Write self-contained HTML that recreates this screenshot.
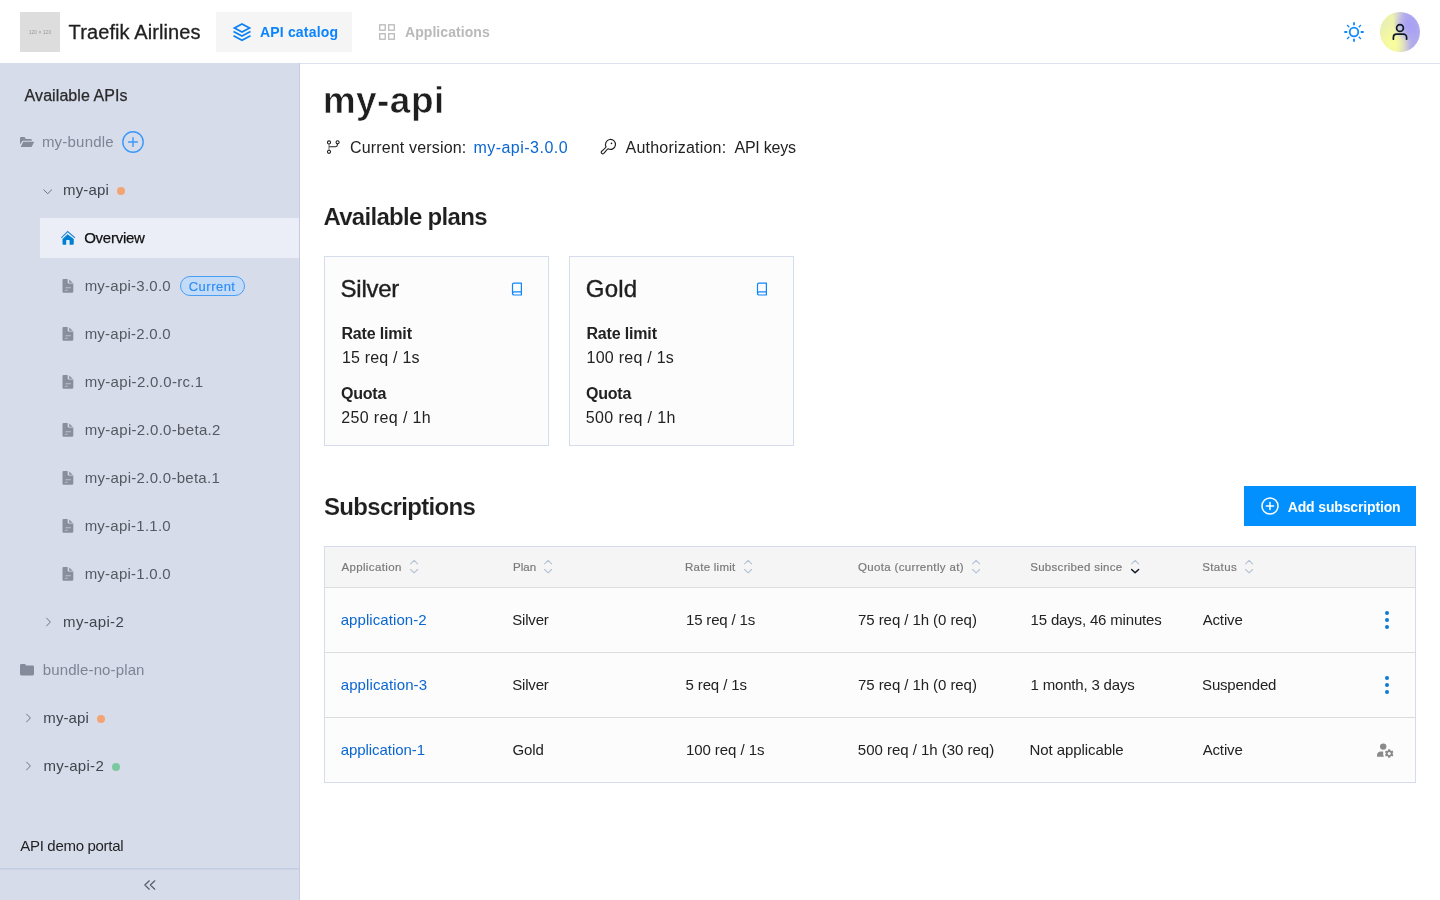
<!DOCTYPE html>
<html lang="en">
<head>
<meta charset="utf-8">
<title>Traefik Airlines - API catalog</title>
<style>
*{box-sizing:border-box;margin:0;padding:0}
html,body{width:1440px;height:900px;overflow:hidden;background:#fff}
body{font-family:"Liberation Sans",sans-serif;color:#222;position:relative;font-size:15px}
.abs,.t{position:absolute;white-space:nowrap}
.t{line-height:20px;height:20px;will-change:transform}
svg{position:absolute;overflow:visible}
a{text-decoration:none;color:inherit}

/* header */
#hdr{position:absolute;left:0;top:0;width:1440px;height:64px;background:#fff;border-bottom:1px solid #dde2ee}
#logo{position:absolute;left:20px;top:12px;width:40px;height:40px;background:#dddddd}
#logo span{position:absolute;left:0;top:17px;width:40px;text-align:center;font-size:5px;line-height:6px;color:#9a9a9a;will-change:transform}
#tab1{position:absolute;left:216px;top:12px;width:136px;height:40px;background:#f5f5f5}

/* sidebar */
#side{position:absolute;left:0;top:63px;width:300px;height:837px;background:#d6dcea;border-right:1px solid #c3cde2}
#sel{position:absolute;left:40px;top:155px;width:259px;height:40px;background:#ebeef6}
#sfoot{position:absolute;left:0;top:805px;width:299px;height:32px;border-top:1px solid #c3cde2;box-shadow:inset 0 1px 0 rgba(195,205,226,.55)}
.dot{position:absolute;width:8px;height:8px;border-radius:50%}
.badge{position:absolute;left:180px;top:212px;width:65px;height:20px;border:1px solid #4a9ff5;border-radius:10px;background:#c3dbf6}

/* main */
.card{position:absolute;top:256px;width:225px;height:190px;border:1px solid #d5dcec;background:#fcfcfc}
#btn{position:absolute;left:1244px;top:486px;width:172px;height:40px;background:#0290ff}
#tbl{position:absolute;left:324px;top:546px;width:1092px;height:237px;border:1px solid #d5dcec;background:#fcfcfc}
#th{position:absolute;left:0;top:0;width:1090px;height:41px;background:#f5f5f5;border-bottom:1px solid #dcdcdc}
.rb{position:absolute;left:0;width:1090px;height:1px;background:#dcdcdc}
.h{font-size:11.5px;color:#7a7a7a;font-weight:400;-webkit-text-stroke:0.2px #7a7a7a}
.lnk{color:#0b66d0}
.b{font-weight:700}
.sv{color:#565961}
#h1{-webkit-text-stroke:0.6px #fff}
#h2a,#h2b{-webkit-text-stroke:0.1px #fff}
#c1t,#c2t{-webkit-text-stroke:0.4px #1f1f1f}
#s-ov{-webkit-text-stroke:0.25px #111}
#s-title{-webkit-text-stroke:0.25px #2a2a2a}
#s-cur{-webkit-text-stroke:0.2px #2f8ef5}
#brand{-webkit-text-stroke:0.3px #1f1f1f}
</style>
<style id="fit">
#brand{letter-spacing:0.101px;text-indent:0.62px}
#tabt1{letter-spacing:0.175px;text-indent:-0.03px}
#tabt2{letter-spacing:0.06px;text-indent:0.04px}
#s-title{letter-spacing:0.078px;text-indent:0.61px}
#s-b1{letter-spacing:0.224px;text-indent:-0.11px}
#s-a1{letter-spacing:0.144px;text-indent:-0.01px}
#s-ov{letter-spacing:-0.24px;text-indent:0.13px}
#sv0{letter-spacing:0.243px;text-indent:0.64px}
#s-cur{letter-spacing:0.481px;text-indent:-0.25px}
#sv1{letter-spacing:0.243px;text-indent:0.64px}
#sv2{letter-spacing:0.324px;text-indent:0.64px}
#sv3{letter-spacing:0.316px;text-indent:0.64px}
#sv4{letter-spacing:0.283px;text-indent:0.64px}
#sv5{letter-spacing:0.243px;text-indent:0.64px}
#sv6{letter-spacing:0.243px;text-indent:0.64px}
#s-a2{letter-spacing:0.332px;text-indent:0.1px}
#s-b2{letter-spacing:0.124px;text-indent:0.75px}
#s-a3{letter-spacing:0.084px;text-indent:0.33px}
#s-a4{letter-spacing:0.287px;text-indent:0.38px}
#s-portal{letter-spacing:-0.307px;text-indent:0.25px}
#h1{letter-spacing:0.475px;text-indent:-1.38px}
#m1{letter-spacing:0.17px;text-indent:-0.1px}
#m2{letter-spacing:0.48px;text-indent:-0.61px}
#m3{letter-spacing:0.213px;text-indent:-0.51px}
#m4{letter-spacing:-0.235px;text-indent:0.47px}
#h2a{letter-spacing:-0.696px;text-indent:-0.61px}
#c1t{letter-spacing:-0.273px;text-indent:-0.42px}
#c1a{letter-spacing:-0.166px;text-indent:0.46px}
#c1b{letter-spacing:0.193px;text-indent:0.95px}
#c1c{letter-spacing:-0.208px;text-indent:-0.04px}
#c1d{letter-spacing:0.359px;text-indent:0.3px}
#c2t{letter-spacing:0.158px;text-indent:-0.18px}
#c2a{letter-spacing:-0.166px;text-indent:0.46px}
#c2b{letter-spacing:0.253px;text-indent:0.55px}
#c2c{letter-spacing:-0.208px;text-indent:-0.04px}
#c2d{letter-spacing:0.383px;text-indent:-0.24px}
#h2b{letter-spacing:-0.681px;text-indent:-0.02px}
#btnt{letter-spacing:-0.151px;text-indent:-0.26px}
#th0{letter-spacing:0.362px;text-indent:0.42px}
#th1{letter-spacing:0.042px;text-indent:-0.01px}
#th2{letter-spacing:0.266px;text-indent:-1.04px}
#th3{letter-spacing:0.349px;text-indent:-0.14px}
#th4{letter-spacing:0.3px;text-indent:0.18px}
#th5{letter-spacing:0.359px;text-indent:-0.72px}
#r0c0{letter-spacing:0.078px;text-indent:-0.32px}
#r1c0{letter-spacing:0.108px;text-indent:-0.32px}
#r2c0{letter-spacing:-0.052px;text-indent:-0.32px}
#r0c1{letter-spacing:-0.181px;text-indent:-0.79px}
#r1c1{letter-spacing:-0.181px;text-indent:-0.79px}
#r2c1{letter-spacing:-0.119px;text-indent:-0.53px}
#r0c2{letter-spacing:-0.156px;text-indent:-0.06px}
#r1c2{letter-spacing:-0.116px;text-indent:-0.54px}
#r2c2{letter-spacing:-0.07px;text-indent:-0.06px}
#r0c3{letter-spacing:-0.066px;text-indent:0.02px}
#r1c3{letter-spacing:-0.066px;text-indent:0.02px}
#r2c3{letter-spacing:-0.019px;text-indent:-0.2px}
#r0c4{letter-spacing:-0.172px;text-indent:0.61px}
#r1c4{letter-spacing:-0.188px;text-indent:0.61px}
#r2c4{letter-spacing:-0.074px;text-indent:-0.43px}
#r0c5{letter-spacing:-0.133px;text-indent:-0.38px}
#r1c5{letter-spacing:-0.204px;text-indent:-0.9px}
#r2c5{letter-spacing:-0.133px;text-indent:-0.38px}
</style>
</head>
<body>

<!-- ================= HEADER ================= -->
<div id="hdr">
  <div id="logo"><span>120 × 120</span></div>
  <div class="t" id="brand" style="left:68px;top:20px;font-size:20px;line-height:24px;height:24px;color:#1f1f1f">Traefik Airlines</div>
  <div id="tab1"></div>
  <div class="t b" id="tabt1" style="left:260px;top:22px;color:#0a84ff;font-size:14px">API catalog</div>

  <!-- layers icon -->
  <svg id="ic-layers" style="left:233px;top:22px" width="18" height="20" viewBox="0 0 18 20" fill="none" stroke="#0a80f2" stroke-width="1.7" stroke-linejoin="miter" stroke-linecap="butt">
    <path d="M9 1.9 L16.6 6 L9 10.1 L1.4 6 Z"/>
    <path d="M0.5 9.6 L9 14 L17.5 9.6"/>
    <path d="M0.5 13.8 L9 18.2 L17.5 13.8"/>
  </svg>
  <!-- grid icon -->
  <svg id="ic-grid" style="left:378px;top:24px" width="18" height="16" viewBox="0 0 18 16" fill="none" stroke="#b7b7b7" stroke-width="1.25">
    <rect x="1.7" y="0.8" width="5.5" height="5.4"/>
    <rect x="10.7" y="0.8" width="5.6" height="5.4"/>
    <rect x="1.7" y="9.7" width="5.5" height="5.5"/>
    <rect x="10.7" y="9.7" width="5.6" height="5.5"/>
  </svg>
  <!-- sun icon -->
  <svg id="ic-sun" style="left:1344px;top:22px" width="20" height="20" viewBox="0 0 20 20" fill="none" stroke="#1188ff" stroke-width="1.8" stroke-linecap="butt">
    <circle cx="10" cy="10" r="4.3"/>
    <path d="M10 0.3v3M10 16.7v3M0.3 10h3M16.7 10h3"/>
    <path d="M3.1 3.1l2.1 2.1M14.8 14.8l2.1 2.1M3.1 16.9l2.1-2.1M14.8 5.2l2.1-2.1" stroke-width="1.35"/>
  </svg>
  <!-- avatar -->
  <div id="avatar" style="position:absolute;left:1380px;top:12px;width:40px;height:40px;border-radius:50%;background:radial-gradient(circle at 72% 35%,rgba(166,156,247,.85) 0%,rgba(166,156,247,0) 40%),radial-gradient(circle at 30% 78%,rgba(251,254,154,.95) 0%,rgba(251,254,154,0) 48%),linear-gradient(83deg,#e6edb4 0%,#eef3ac 37%,#d2cfd6 52%,#b3adec 67%,#aea9ee 85%,#b9b5e6 100%)"></div>
  <svg id="ic-user" style="left:1391px;top:23px" width="18" height="18" viewBox="0 0 18 18" fill="none" stroke="#0e1a2b" stroke-width="1.7" stroke-linecap="round">
    <circle cx="9" cy="5" r="3.4"/>
    <path d="M2.4 16.2v-2a3.1 3.1 0 0 1 3.1-3.1h7a3.1 3.1 0 0 1 3.1 3.1v2"/>
  </svg>
  <div class="t b" id="tabt2" style="left:405px;top:22px;color:#b9b9b9;font-size:14px">Applications</div>
</div>

<!-- ================= SIDEBAR ================= -->
<div id="side">
  <div id="sel"></div>
  <div id="sfoot"></div>
</div>


<!-- sidebar content (absolute to body) -->
<div class="t" id="s-title" style="left:24px;top:86px;font-size:16px;color:#2a2a2a">Available APIs</div>

<!-- my-bundle -->
<svg id="ic-fopen" style="left:20px;top:137px" width="14" height="10" viewBox="0 0 14 10"><path d="M0 1a1 1 0 0 1 1-1h3.5l1.3 1.9h5a1 1 0 0 1 1 1v.95H3.3a1.6 1.6 0 0 0-1.45.9L0 7.6z" fill="#868b9b"/><path d="M3.2 4.8h10.3a.45.45 0 0 1 .4.65l-2.1 4a1 1 0 0 1-.9.55H.75z" fill="#868b9b"/></svg>
<div class="t" id="s-b1" style="left:42px;top:132px;color:#7e8495">my-bundle</div>
<svg id="ic-plusc" style="left:122px;top:131px" width="22" height="22" viewBox="0 0 22 22" fill="none" stroke="#3b98fb" stroke-width="1.4" stroke-linecap="round"><circle cx="11" cy="11" r="10.2"/><path d="M11 6.6v8.8M6.6 11h8.8"/></svg>

<!-- my-api (expanded) -->
<svg id="ic-chd" style="left:43px;top:189px" width="10" height="6" viewBox="0 0 10 6" fill="none" stroke="#6e7484" stroke-width="1" stroke-linecap="round" stroke-linejoin="round"><path d="M0.8 0.9l3.9 3.8 3.9-3.8"/></svg>
<div class="t" id="s-a1" style="left:63px;top:180px;color:#42454d">my-api</div>
<div class="dot" style="left:117px;top:186.8px;background:#f4a373"></div>

<!-- overview -->
<svg id="ic-home" style="left:61px;top:231px" width="14" height="14" viewBox="0 0 14 14"><path d="M0.3 6.8L6.65 0.5l7.2 6.3" fill="none" stroke="#2a8ad9" stroke-width="1.15" stroke-linejoin="miter"/><path d="M6.65 3.2l6.1 4.9v4.6a1 1 0 0 1-1 1H8.6V9.5a.5.5 0 0 0-.5-.5H5.7a.5.5 0 0 0-.5.5v4.2H2.5a1 1 0 0 1-1-1V8.1z" fill="#0080d0"/></svg>
<div class="t" id="s-ov" style="left:84px;top:228px;color:#111;font-weight:400">Overview</div>
<svg class="fi" style="left:62px;top:279px" width="12" height="14" viewBox="0 0 12 14"><path d="M1.5 0H5.7V3.6a1 1 0 0 0 1 1H11.3V12.8a1 1 0 0 1-1 1H1.5a1 1 0 0 1-1-1V1a1 1 0 0 1 1-1z" fill="#898e9d"/><path d="M7.2 0.5L10.7 3.7H7.2z" fill="#898e9d"/><path d="M3.6 8.2h5.4l-.5 1H3.1zM3 10.8h2.9l-.4 1H2.6z" fill="#bcc0cc"/></svg>
  <div class="t sv" id="sv0" style="left:84px;top:276px">my-api-3.0.0</div>
  <div class="badge" style="top:276px"></div><div class="t" id="s-cur" style="left:189px;top:277px;font-size:13px;color:#2f8ef5">Current</div>
<svg class="fi" style="left:62px;top:327px" width="12" height="14" viewBox="0 0 12 14"><path d="M1.5 0H5.7V3.6a1 1 0 0 0 1 1H11.3V12.8a1 1 0 0 1-1 1H1.5a1 1 0 0 1-1-1V1a1 1 0 0 1 1-1z" fill="#898e9d"/><path d="M7.2 0.5L10.7 3.7H7.2z" fill="#898e9d"/><path d="M3.6 8.2h5.4l-.5 1H3.1zM3 10.8h2.9l-.4 1H2.6z" fill="#bcc0cc"/></svg>
  <div class="t sv" id="sv1" style="left:84px;top:324px">my-api-2.0.0</div>
<svg class="fi" style="left:62px;top:375px" width="12" height="14" viewBox="0 0 12 14"><path d="M1.5 0H5.7V3.6a1 1 0 0 0 1 1H11.3V12.8a1 1 0 0 1-1 1H1.5a1 1 0 0 1-1-1V1a1 1 0 0 1 1-1z" fill="#898e9d"/><path d="M7.2 0.5L10.7 3.7H7.2z" fill="#898e9d"/><path d="M3.6 8.2h5.4l-.5 1H3.1zM3 10.8h2.9l-.4 1H2.6z" fill="#bcc0cc"/></svg>
  <div class="t sv" id="sv2" style="left:84px;top:372px">my-api-2.0.0-rc.1</div>
<svg class="fi" style="left:62px;top:423px" width="12" height="14" viewBox="0 0 12 14"><path d="M1.5 0H5.7V3.6a1 1 0 0 0 1 1H11.3V12.8a1 1 0 0 1-1 1H1.5a1 1 0 0 1-1-1V1a1 1 0 0 1 1-1z" fill="#898e9d"/><path d="M7.2 0.5L10.7 3.7H7.2z" fill="#898e9d"/><path d="M3.6 8.2h5.4l-.5 1H3.1zM3 10.8h2.9l-.4 1H2.6z" fill="#bcc0cc"/></svg>
  <div class="t sv" id="sv3" style="left:84px;top:420px">my-api-2.0.0-beta.2</div>
<svg class="fi" style="left:62px;top:471px" width="12" height="14" viewBox="0 0 12 14"><path d="M1.5 0H5.7V3.6a1 1 0 0 0 1 1H11.3V12.8a1 1 0 0 1-1 1H1.5a1 1 0 0 1-1-1V1a1 1 0 0 1 1-1z" fill="#898e9d"/><path d="M7.2 0.5L10.7 3.7H7.2z" fill="#898e9d"/><path d="M3.6 8.2h5.4l-.5 1H3.1zM3 10.8h2.9l-.4 1H2.6z" fill="#bcc0cc"/></svg>
  <div class="t sv" id="sv4" style="left:84px;top:468px">my-api-2.0.0-beta.1</div>
<svg class="fi" style="left:62px;top:519px" width="12" height="14" viewBox="0 0 12 14"><path d="M1.5 0H5.7V3.6a1 1 0 0 0 1 1H11.3V12.8a1 1 0 0 1-1 1H1.5a1 1 0 0 1-1-1V1a1 1 0 0 1 1-1z" fill="#898e9d"/><path d="M7.2 0.5L10.7 3.7H7.2z" fill="#898e9d"/><path d="M3.6 8.2h5.4l-.5 1H3.1zM3 10.8h2.9l-.4 1H2.6z" fill="#bcc0cc"/></svg>
  <div class="t sv" id="sv5" style="left:84px;top:516px">my-api-1.1.0</div>
<svg class="fi" style="left:62px;top:567px" width="12" height="14" viewBox="0 0 12 14"><path d="M1.5 0H5.7V3.6a1 1 0 0 0 1 1H11.3V12.8a1 1 0 0 1-1 1H1.5a1 1 0 0 1-1-1V1a1 1 0 0 1 1-1z" fill="#898e9d"/><path d="M7.2 0.5L10.7 3.7H7.2z" fill="#898e9d"/><path d="M3.6 8.2h5.4l-.5 1H3.1zM3 10.8h2.9l-.4 1H2.6z" fill="#bcc0cc"/></svg>
  <div class="t sv" id="sv6" style="left:84px;top:564px">my-api-1.0.0</div>

<!-- my-api-2 collapsed -->
<svg class="chr" style="left:45px;top:617px" width="7" height="10" viewBox="0 0 7 10" fill="none" stroke="#6e7484" stroke-width="1" stroke-linecap="round" stroke-linejoin="round"><path d="M1.6 1.1l3.8 3.9-3.8 3.9"/></svg>
<div class="t" id="s-a2" style="left:63px;top:612px;color:#42454d">my-api-2</div>

<!-- bundle-no-plan -->
<svg id="ic-fold" style="left:20px;top:664px" width="14" height="12" viewBox="0 0 14 12"><path d="M1.4 0h3.5l1.4 1.5h6.3A1.4 1.4 0 0 1 14 2.9v7.2a1.4 1.4 0 0 1-1.4 1.4H1.4A1.4 1.4 0 0 1 0 10.1V1.4A1.4 1.4 0 0 1 1.4 0z" fill="#868b9b"/></svg>
<div class="t" id="s-b2" style="left:42px;top:660px;color:#7e8495">bundle-no-plan</div>

<svg class="chr" style="left:25px;top:713px" width="7" height="10" viewBox="0 0 7 10" fill="none" stroke="#6e7484" stroke-width="1" stroke-linecap="round" stroke-linejoin="round"><path d="M1.6 1.1l3.8 3.9-3.8 3.9"/></svg>
<div class="t" id="s-a3" style="left:43px;top:708px;color:#42454d">my-api</div>
<div class="dot" style="left:97px;top:714.8px;background:#f4a373"></div>

<svg class="chr" style="left:25px;top:761px" width="7" height="10" viewBox="0 0 7 10" fill="none" stroke="#6e7484" stroke-width="1" stroke-linecap="round" stroke-linejoin="round"><path d="M1.6 1.1l3.8 3.9-3.8 3.9"/></svg>
<div class="t" id="s-a4" style="left:43px;top:756px;color:#42454d">my-api-2</div>
<div class="dot" style="left:112px;top:762.8px;background:#7cc8a0"></div>

<div class="t" id="s-portal" style="left:20px;top:836px;color:#1f1f1f">API demo portal</div>
<svg id="ic-dbl" style="left:144px;top:880px" width="12" height="10" viewBox="0 0 12 10" fill="none" stroke="#565b69" stroke-width="1.2" stroke-linecap="round" stroke-linejoin="round"><path d="M5.3 0.8L0.8 5l4.5 4.2M10.8 0.8L6.3 5l4.5 4.2"/></svg>

<!-- ================= MAIN ================= -->

<div class="t" id="h1" style="left:324px;top:79px;font-size:37px;line-height:44px;height:44px;font-weight:700;color:#1f1f1f">my-api</div>

<svg id="ic-branch" style="left:326px;top:140px" width="14" height="14" viewBox="0 0 14 14" fill="none" stroke="#1f1f1f" stroke-width="1.1"><circle cx="3" cy="2.4" r="1.55"/><circle cx="3" cy="11.8" r="1.55"/><circle cx="11.6" cy="2.3" r="1.55"/><path d="M3 4v6.2" stroke-width="0.9" stroke="#555"/><path d="M11.4 3.9v0.9a1.9 1.9 0 0 1-1.9 1.9H3.2"/></svg>
<div class="t" id="m1" style="left:350px;top:138px;font-size:16px">Current version:</div>
<div class="t lnk" id="m2" style="left:474px;top:138px;font-size:16px">my-api-3.0.0</div>
<svg id="ic-key" style="left:600px;top:138px" width="16" height="16" viewBox="0 0 16 16" fill="none" stroke="#1f1f1f" stroke-width="1.15" stroke-linejoin="round"><path d="M6.07 8.71A5 5 0 1 1 8.19 10.83C6.6 11.6 5.6 13.5 3.76 15.36A1.5 1.5 0 0 1 1.64 13.24C3.5 11.4 5.4 10.3 6.07 8.71z"/><circle cx="11.5" cy="5.4" r="0.8" fill="#1f1f1f" stroke="none"/></svg>
<div class="t" id="m3" style="left:626px;top:138px;font-size:16px">Authorization:</div>
<div class="t" id="m4" style="left:734px;top:138px;font-size:16px">API keys</div>

<div class="t b" id="h2a" style="left:324px;top:203px;font-size:24px;line-height:28px;height:28px;color:#1f1f1f">Available plans</div>

<div class="card" style="left:324px"></div>
<div class="t" id="c1t" style="left:341px;top:275px;font-size:24px;line-height:28px;height:28px;color:#1f1f1f">Silver</div>
<svg class="bk" style="left:512px;top:282px" width="11" height="14" viewBox="0 0 11 14" fill="none" stroke="#0d86ff" stroke-width="1.2" stroke-linejoin="round"><path d="M1.9 1.1h7.5v11.9H2.1A1.6 1.6 0 0 1 0.5 11.4V2.5A1.4 1.4 0 0 1 1.9 1.1z"/><path d="M0.6 11.3a1.5 1.5 0 0 1 1.5-1.5h7.3"/></svg>
<div class="t b" id="c1a" style="left:341px;top:324px;font-size:16px">Rate limit</div>
<div class="t" id="c1b" style="left:341px;top:348px;font-size:16px">15 req / 1s</div>
<div class="t b" id="c1c" style="left:341px;top:384px;font-size:16px">Quota</div>
<div class="t" id="c1d" style="left:341px;top:408px;font-size:16px">250 req / 1h</div>

<div class="card" style="left:569px"></div>
<div class="t" id="c2t" style="left:586px;top:275px;font-size:24px;line-height:28px;height:28px;color:#1f1f1f">Gold</div>
<svg class="bk" style="left:757px;top:282px" width="11" height="14" viewBox="0 0 11 14" fill="none" stroke="#0d86ff" stroke-width="1.2" stroke-linejoin="round"><path d="M1.9 1.1h7.5v11.9H2.1A1.6 1.6 0 0 1 0.5 11.4V2.5A1.4 1.4 0 0 1 1.9 1.1z"/><path d="M0.6 11.3a1.5 1.5 0 0 1 1.5-1.5h7.3"/></svg>
<div class="t b" id="c2a" style="left:586px;top:324px;font-size:16px">Rate limit</div>
<div class="t" id="c2b" style="left:586px;top:348px;font-size:16px">100 req / 1s</div>
<div class="t b" id="c2c" style="left:586px;top:384px;font-size:16px">Quota</div>
<div class="t" id="c2d" style="left:586px;top:408px;font-size:16px">500 req / 1h</div>

<div class="t b" id="h2b" style="left:324px;top:493px;font-size:24px;line-height:28px;height:28px;color:#1f1f1f">Subscriptions</div>
<div id="btn"></div>
<svg id="ic-addc" style="left:1261px;top:497px" width="18" height="18" viewBox="0 0 18 18" fill="none" stroke="#fff" stroke-width="1.5" stroke-linecap="round"><circle cx="9" cy="9" r="8"/><path d="M9 5.4v7.2M5.4 9h7.2"/></svg>
<div class="t b" id="btnt" style="left:1288px;top:497px;font-size:14px;color:#fff">Add subscription</div>

<div id="tbl"><div id="th"></div><div class="rb" style="top:105px"></div><div class="rb" style="top:170px"></div></div>
<div class="t h" id="th0" style="left:341px;top:557px">Application</div><svg class="so" style="left:409px;top:559px" width="10" height="16" viewBox="0 0 10 16" fill="none" stroke-width="1.1" stroke-linecap="round" stroke-linejoin="round"><path d="M1.6 4.9L5.1 1.4l3.5 3.5" stroke="#b4c2d6"/><path d="M1.6 10.5L5.1 13.8l3.5-3.3" stroke="#b4c2d6" stroke-width="1.1"/></svg>
<div class="t h" id="th1" style="left:513px;top:557px">Plan</div><svg class="so" style="left:543px;top:559px" width="10" height="16" viewBox="0 0 10 16" fill="none" stroke-width="1.1" stroke-linecap="round" stroke-linejoin="round"><path d="M1.6 4.9L5.1 1.4l3.5 3.5" stroke="#b4c2d6"/><path d="M1.6 10.5L5.1 13.8l3.5-3.3" stroke="#b4c2d6" stroke-width="1.1"/></svg>
<div class="t h" id="th2" style="left:686px;top:557px">Rate limit</div><svg class="so" style="left:743px;top:559px" width="10" height="16" viewBox="0 0 10 16" fill="none" stroke-width="1.1" stroke-linecap="round" stroke-linejoin="round"><path d="M1.6 4.9L5.1 1.4l3.5 3.5" stroke="#b4c2d6"/><path d="M1.6 10.5L5.1 13.8l3.5-3.3" stroke="#b4c2d6" stroke-width="1.1"/></svg>
<div class="t h" id="th3" style="left:858px;top:557px">Quota (currently at)</div><svg class="so" style="left:971px;top:559px" width="10" height="16" viewBox="0 0 10 16" fill="none" stroke-width="1.1" stroke-linecap="round" stroke-linejoin="round"><path d="M1.6 4.9L5.1 1.4l3.5 3.5" stroke="#b4c2d6"/><path d="M1.6 10.5L5.1 13.8l3.5-3.3" stroke="#b4c2d6" stroke-width="1.1"/></svg>
<div class="t h" id="th4" style="left:1030px;top:557px">Subscribed since</div><svg class="so" style="left:1130px;top:559px" width="10" height="16" viewBox="0 0 10 16" fill="none" stroke-width="1.1" stroke-linecap="round" stroke-linejoin="round"><path d="M1.6 4.9L5.1 1.4l3.5 3.5" stroke="#b4c2d6"/><path d="M1.6 10.5L5.1 13.8l3.5-3.3" stroke="#101828" stroke-width="1.5"/></svg>
<div class="t h" id="th5" style="left:1203px;top:557px">Status</div><svg class="so" style="left:1244px;top:559px" width="10" height="16" viewBox="0 0 10 16" fill="none" stroke-width="1.1" stroke-linecap="round" stroke-linejoin="round"><path d="M1.6 4.9L5.1 1.4l3.5 3.5" stroke="#b4c2d6"/><path d="M1.6 10.5L5.1 13.8l3.5-3.3" stroke="#b4c2d6" stroke-width="1.1"/></svg>
<div class="t lnk" id="r0c0" style="left:341px;top:610px">application-2</div>
<div class="t" id="r0c1" style="left:513px;top:610px">Silver</div>
<div class="t" id="r0c2" style="left:686px;top:610px">15 req / 1s</div>
<div class="t" id="r0c3" style="left:858px;top:610px">75 req / 1h (0 req)</div>
<div class="t" id="r0c4" style="left:1030px;top:610px">15 days, 46 minutes</div>
<div class="t" id="r0c5" style="left:1203px;top:610px">Active</div>
<div class="t lnk" id="r1c0" style="left:341px;top:675px">application-3</div>
<div class="t" id="r1c1" style="left:513px;top:675px">Silver</div>
<div class="t" id="r1c2" style="left:686px;top:675px">5 req / 1s</div>
<div class="t" id="r1c3" style="left:858px;top:675px">75 req / 1h (0 req)</div>
<div class="t" id="r1c4" style="left:1030px;top:675px">1 month, 3 days</div>
<div class="t" id="r1c5" style="left:1203px;top:675px">Suspended</div>
<div class="t lnk" id="r2c0" style="left:341px;top:740px">application-1</div>
<div class="t" id="r2c1" style="left:513px;top:740px">Gold</div>
<div class="t" id="r2c2" style="left:686px;top:740px">100 req / 1s</div>
<div class="t" id="r2c3" style="left:858px;top:740px">500 req / 1h (30 req)</div>
<div class="t" id="r2c4" style="left:1030px;top:740px">Not applicable</div>
<div class="t" id="r2c5" style="left:1203px;top:740px">Active</div>
<svg class="kb" style="left:1384px;top:610px" width="6" height="20" viewBox="0 0 6 20"><circle cx="3" cy="3" r="2" fill="#0b7ad4"/><circle cx="3" cy="10" r="2" fill="#0b7ad4"/><circle cx="3" cy="17" r="2" fill="#0b7ad4"/></svg>
<svg class="kb" style="left:1384px;top:675px" width="6" height="20" viewBox="0 0 6 20"><circle cx="3" cy="3" r="2" fill="#0b7ad4"/><circle cx="3" cy="10" r="2" fill="#0b7ad4"/><circle cx="3" cy="17" r="2" fill="#0b7ad4"/></svg>
<svg id="ic-ucog" style="left:1376px;top:743px" width="18" height="16" viewBox="0 0 18 16"><circle cx="7.2" cy="3.6" r="3.2" fill="#8a8a8a"/><path d="M1 13.7v-1.3c0-2.4 1.5-3.9 4.1-3.9h2.1v3.4l.8 1.8z" fill="#8a8a8a"/><g transform="translate(13.2 10.5)"><path d="M-0.9 -4.2h1.8l.3 1.1 1 .55 1.1-.35.9 1.55-.8.8v1.1l.8.8-.9 1.55-1.1-.35-1 .55-.3 1.1h-1.8l-.3-1.1-1-.55-1.1.35-.9-1.55.8-.8v-1.1l-.8-.8.9-1.55 1.1.35 1-.55z" fill="#8a8a8a"/><circle r="1.5" fill="#fcfcfc"/></g></svg>


</body>
</html>
